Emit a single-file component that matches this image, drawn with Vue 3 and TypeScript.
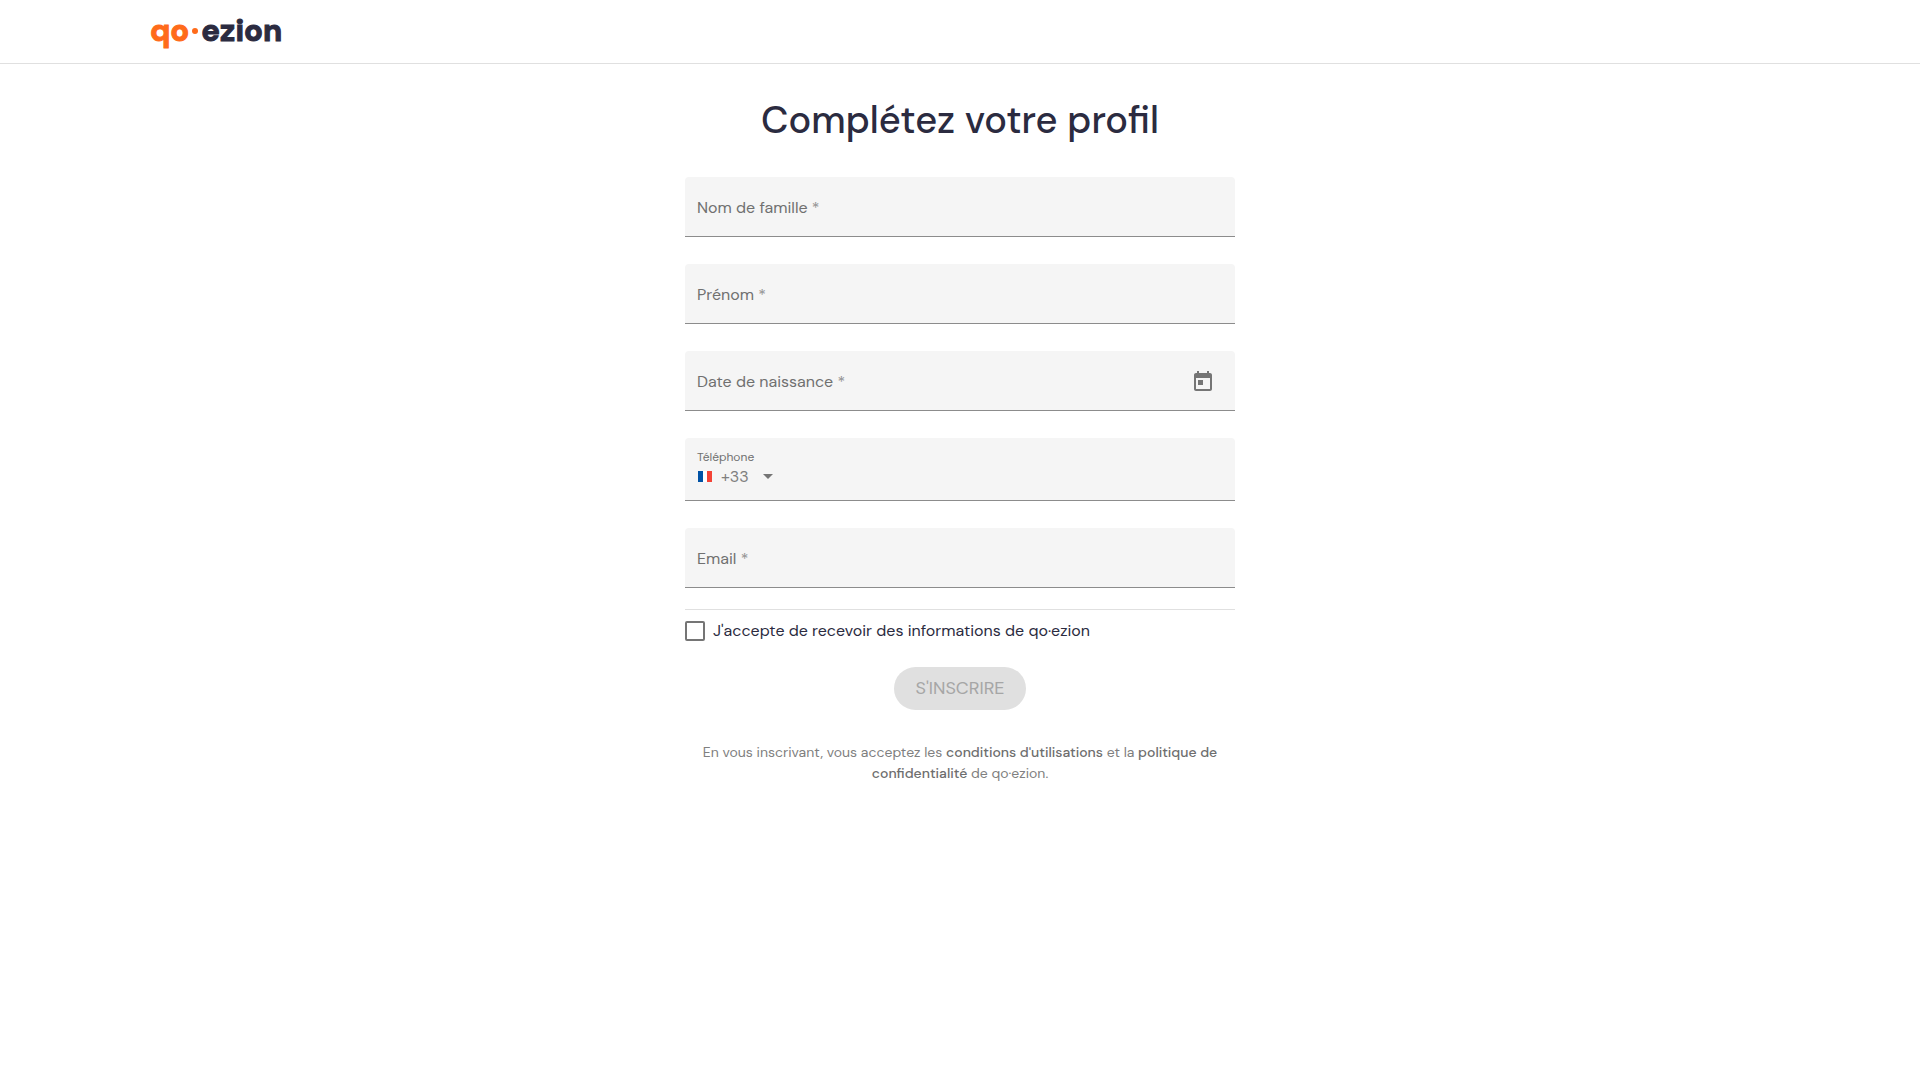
<script setup lang="ts">
import { reactive } from 'vue'

interface Profile {
  lastName: string
  firstName: string
  birthDate: string
  dialCode: string
  phone: string
  email: string
  newsletter: boolean
}

const profile = reactive<Profile>({
  lastName: '',
  firstName: '',
  birthDate: '',
  dialCode: '+33',
  phone: '',
  email: '',
  newsletter: false,
})
</script>

<template>
  <header class="topbar">
    <a class="logo" href="#" aria-label="qo·ezion">
      <span class="logo-accent">qo</span>
      <span class="logo-dot"></span>
      <span>ezion</span>
    </a>
  </header>

  <main class="page">
    <h1 class="title">Complétez votre profil</h1>

    <form class="form" @submit.prevent>
      <div class="fields">
        <div class="field">
          <label class="label" for="last-name">Nom de famille <span class="star">*</span></label>
          <input id="last-name" v-model="profile.lastName" class="control" type="text" />
        </div>

        <div class="field">
          <label class="label" for="first-name">Prénom <span class="star">*</span></label>
          <input id="first-name" v-model="profile.firstName" class="control" type="text" />
        </div>

        <div class="field">
          <label class="label" for="birth-date">Date de naissance <span class="star">*</span></label>
          <input id="birth-date" v-model="profile.birthDate" class="control" type="text" />
          <button class="calendar" type="button" aria-label="Ouvrir le calendrier">
            <svg viewBox="0 0 24 24" width="24" height="24" fill="currentColor">
              <path d="M19 3h-1V1h-2v2H8V1H6v2H5c-1.11 0-1.99.9-1.99 2L3 19c0 1.1.89 2 2 2h14c1.1 0 2-.9 2-2V5c0-1.1-.9-2-2-2zm0 16H5V8h14v11zM7 10h5v5H7z" />
            </svg>
          </button>
        </div>

        <div class="field field-phone">
          <label class="label-small" for="phone">Téléphone</label>
          <div class="phone-row">
            <svg class="flag" viewBox="0 0 14 11" width="14" height="11">
              <rect width="14" height="11" fill="#fff" />
              <rect width="5" height="11" fill="#0052a5" />
              <rect x="9" width="5" height="11" fill="#f44336" />
            </svg>
            <select v-model="profile.dialCode" class="dial" aria-label="Indicatif">
              <option>+33</option>
            </select>
            <svg class="arrow" viewBox="0 0 10 5" width="10" height="5">
              <path d="M0 0h10L5 5z" fill="#757575" />
            </svg>
            <input id="phone" v-model="profile.phone" class="phone-input" type="tel" />
          </div>
        </div>

        <div class="field">
          <label class="label" for="email">Email <span class="star">*</span></label>
          <input id="email" v-model="profile.email" class="control" type="email" />
        </div>
      </div>

      <hr class="divider" />

      <label class="consent" for="newsletter">
        <input id="newsletter" v-model="profile.newsletter" class="checkbox" type="checkbox" />
        <span>J'accepte de recevoir des informations de qo·ezion</span>
      </label>

      <button class="submit" type="submit" disabled>S'INSCRIRE</button>

      <p class="legal">
        En vous inscrivant, vous acceptez les <a href="#">conditions d'utilisations</a> et la
        <a href="#">politique de confidentialité</a> de qo·ezion.
      </p>
    </form>
  </main>
</template>

<style>
body {
  background: #fff;
  color: #2b2b40;
  font-family: 'DM Sans', Inter, 'Liberation Sans', sans-serif;
  font-size: 16px;
}
</style>

<style scoped>
.topbar {
  display: flex;
  align-items: center;
  height: 63px;
  padding: 0 150px;
  border-bottom: 1px solid #e0e0e0;
}

.logo {
  display: flex;
  align-items: center;
  padding-bottom: 2px;
  color: #2b2b40;
  font-size: 31px;
  font-weight: 800;
  line-height: 36px;
  text-decoration: none;
  -webkit-text-stroke: 1px currentColor;
}

.logo-accent {
  color: #ff6b1a;
}

.logo-dot {
  width: 6px;
  height: 6px;
  margin: 0 3px;
  border-radius: 50%;
  background: #ff6b1a;
}

.page {
  max-width: 550px;
  margin: 0 auto;
  padding: 32px 16px;
}

.title {
  margin: 0 0 33px;
  font-size: 38px;
  font-weight: 500;
  line-height: 48px;
  text-align: center;
}

.form {
  display: flex;
  flex-direction: column;
}

.fields {
  display: flex;
  flex-direction: column;
  gap: 27px;
}

.field {
  display: grid;
  grid-template-columns: 1fr auto;
  align-items: center;
  min-height: 57px;
  padding-top: 2px;
  border-bottom: 1px solid #8c8c8c;
  border-radius: 4px 4px 0 0;
  background: #f5f5f5;
  color: #707070;
}

.label {
  grid-area: 1 / 1;
  z-index: 1;
  padding: 0 12px;
  line-height: 20px;
  pointer-events: none;
}

.star {
  color: #929292;
}

.control {
  grid-area: 1 / 1;
  align-self: stretch;
  min-width: 0;
  padding: 0 12px;
  border: 0;
  outline: 0;
  background: transparent;
  font: inherit;
}

.calendar {
  display: flex;
  margin-right: 20px;
  padding: 0;
  border: 0;
  background: none;
  color: #757575;
}

.field-phone {
  grid-template-columns: 1fr;
  align-content: start;
  min-height: 51px;
  padding: 11px 12px 0;
}

.label-small {
  font-size: 12px;
  line-height: 16px;
}

.phone-row {
  display: flex;
  align-items: center;
  height: 22px;
}

.flag {
  margin: 0 9px 0 1px;
}

.dial {
  width: 42px;
  padding: 0;
  border: 0;
  outline: 0;
  appearance: none;
  background: transparent;
  color: #808080;
  font: inherit;
}

.phone-input {
  flex: 1;
  min-width: 0;
  border: 0;
  outline: 0;
  background: transparent;
  font: inherit;
}

.divider {
  width: 100%;
  height: 1px;
  margin: 21px 0 11px;
  border: 0;
  background: #e0e0e0;
}

.consent {
  display: flex;
  align-items: center;
  gap: 8px;
  line-height: 20px;
}

.checkbox {
  flex: none;
  width: 20px;
  height: 20px;
  margin: 0;
  border: 2px solid #757575;
  border-radius: 2px;
  appearance: none;
  background: #fff;
}

.checkbox:checked {
  background: #ff6b1a;
}

.submit {
  align-self: center;
  margin: 26px 0 32px;
  padding: 0 21px;
  border: 0;
  border-radius: 22px;
  background: #e0e0e0;
  color: #a6a6a6;
  font: inherit;
  font-size: 18px;
  line-height: 43px;
}

.legal {
  margin: 0;
  color: #808080;
  font-size: 14px;
  line-height: 21px;
  text-align: center;
}

.legal a {
  color: #6e6e6e;
  font-weight: 500;
  text-decoration: none;
}
</style>
